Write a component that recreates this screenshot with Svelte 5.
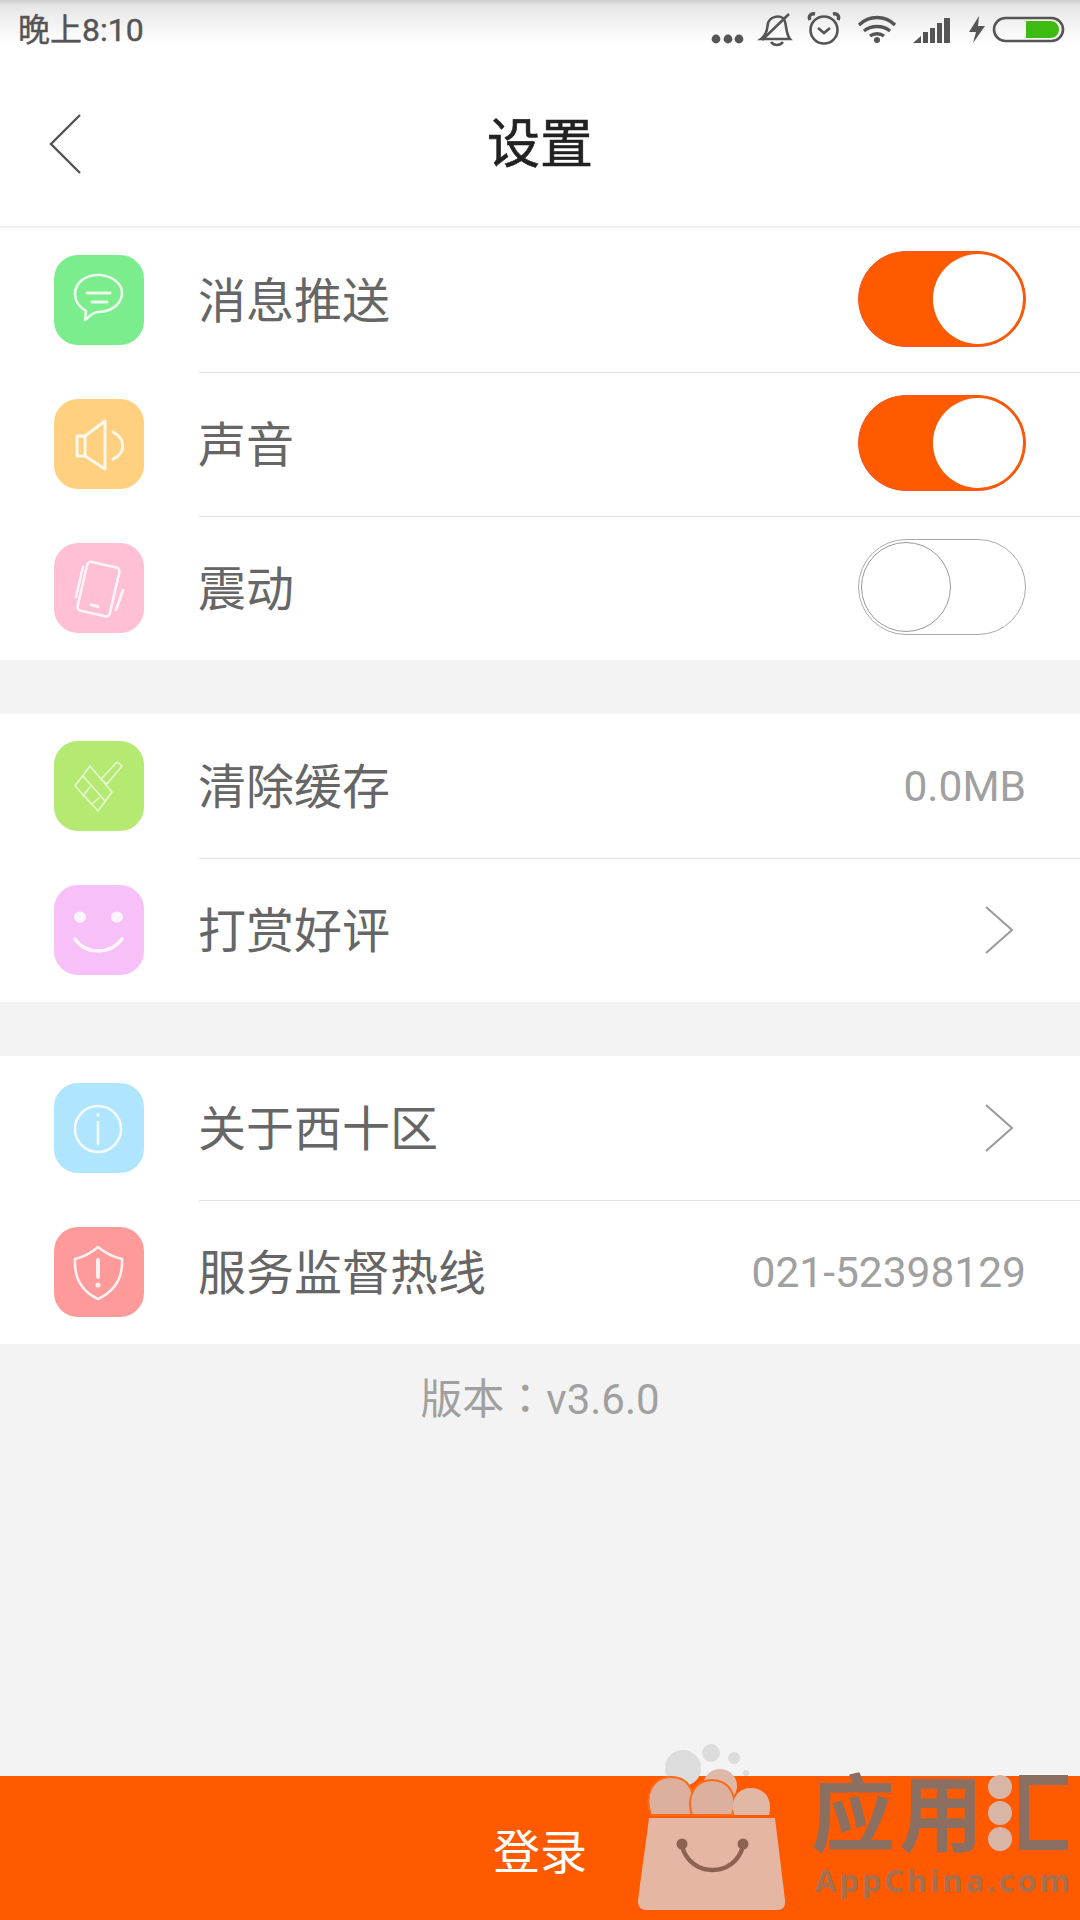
<script>
    // settings groups
    const groups = [
        [
            { icon: 'msg', label: '消息推送', toggle: true },
            { icon: 'sound', label: '声音', toggle: true },
            { icon: 'shake', label: '震动', toggle: false }
        ],
        [
            { icon: 'broom', label: '清除缓存', value: '0.0MB' },
            { icon: 'smile', label: '打赏好评', arrow: true }
        ],
        [
            { icon: 'info', label: '关于西十区', arrow: true },
            { icon: 'shield', label: '服务监督热线', value: '021-52398129' }
        ]
    ];
</script>

{#snippet rowIcon(kind)}
    <span class="icon {kind}">
        <svg viewBox="0 0 90 90" width="90" height="90" fill="none" stroke="#fff" stroke-width="2.6" stroke-linecap="round" stroke-linejoin="round" opacity="0.85">
            {#if kind === 'msg'}
                <path d="M31 65 L32 56 C25 52 21 46 21 39 C21 28 31 20 44 20 C57 20 68 28 68 38 C68 49 57 57 44 57 C41 57 39 58 31 65 Z" />
                <path d="M33 38 H56 M38 47 H53" stroke-width="3" />
            {:else if kind === 'sound'}
                <path d="M23 37 H31 V57 H23 Z" stroke-width="3" />
                <path d="M31 37 L51 22 V70 L31 57" stroke-width="3" />
                <path d="M59 33 C72 40 72 54 59 60" stroke-width="3" />
            {:else if kind === 'shake'}
                <g transform="rotate(13 44 46)">
                    <rect x="28" y="21" width="33" height="50" rx="4" />
                    <path d="M41 63 H48" stroke-width="3" />
                </g>
                <path d="M29 24 L22 54 M69 47 L62 67" />
            {:else if kind === 'broom'}
                <g opacity="0.8">
                    <path d="M21 45 L36 25 L58 51 L44 70 Z" stroke-width="1.6" />
                    <path d="M29 35 L51 60 M36 46 L29 55 M45 57 L38 63 M47 38 L53 43 L68 25 L63 21 Z" stroke-width="1.6" />
                </g>
            {:else if kind === 'smile'}
                <ellipse cx="26" cy="32" rx="6" ry="5.5" fill="#fff" stroke="none" />
                <ellipse cx="63" cy="32" rx="6" ry="5.5" fill="#fff" stroke="none" />
                <path d="M21 54 C32 70 56 70 68 54" stroke-width="3.6" />
            {:else if kind === 'info'}
                <circle cx="44" cy="46" r="23" />
                <path d="M44 39 V61" />
                <circle cx="44" cy="32" r="1.8" fill="#fff" stroke="none" />
            {:else if kind === 'shield'}
                <path d="M44 20 C51 26 59 30 68 32 C69 50 61 64 44 72 C27 64 20 50 21 32 C30 30 37 26 44 20 Z" />
                <path d="M44 33 V50" stroke-width="4" />
                <circle cx="44" cy="58" r="2.6" fill="#fff" stroke="none" />
            {/if}
        </svg>
    </span>
{/snippet}

<div class="page">
    <div class="statusbar">
        <span class="time">晚上8:10</span>
        <svg class="status-icons" width="376" height="50" viewBox="704 0 376 50" fill="none" stroke="#555" stroke-width="2.6">
            <g fill="#555" stroke="none">
                <circle cx="716" cy="39" r="4.4" />
                <circle cx="728" cy="39" r="4.4" />
                <circle cx="739" cy="39" r="4.4" />
            </g>
            <!-- bell -->
            <path d="M761 39 C768 34 767 27 768 23 C770 17 778 15 783 18 C787 21 785 33 790 39 Z" />
            <path d="M771 42 C774 46 780 46 783 42 M762 40 L789 14" />
            <!-- alarm -->
            <circle cx="824" cy="30" r="13.5" />
            <path d="M818 28 L824 33 L830 28" />
            <path d="M810 20 C808 16 811 13 815 14 M838 20 C840 16 837 13 833 14" stroke-width="3.4" />
            <!-- wifi -->
            <path d="M859 25 C869 15 885 15 895 25 M864 31 C871 25 883 25 890 31 M870 36 C874 33 880 33 884 36" stroke-width="3.4" />
            <circle cx="877" cy="40" r="3" fill="#555" stroke="none" />
            <!-- signal -->
            <g fill="#555" stroke="none">
                <path d="M913 43 L921 36 V43 Z" />
                <rect x="923" y="32" width="5" height="11" />
                <rect x="930" y="28" width="5" height="15" />
                <rect x="937" y="23" width="5" height="20" />
                <rect x="944" y="18" width="6" height="25" />
                <!-- bolt -->
                <path d="M979 16 L969 32 L976 32 L973 43 L985 26 L978 26 Z" />
            </g>
            <!-- battery -->
            <rect x="994" y="18" width="69" height="23" rx="11.5" />
            <path d="M1026 21 H1050 C1062 21 1062 38 1050 38 H1026 Z" fill="#3dbb10" stroke="none" />
        </svg>
    </div>

    <header class="nav">
        <svg class="back" width="34" height="62" viewBox="0 0 34 62" fill="none" stroke="#555" stroke-width="2.4">
            <path d="M32 2 L3 31 L32 60" />
        </svg>
        <h1>设置</h1>
    </header>

    {#each groups as group}
        <section class="group">
            {#each group as row}
                <div class="row">
                    {@render rowIcon(row.icon)}
                    <div class="row-main">
                        <span class="label">{row.label}</span>
                        {#if row.value}
                            <span class="value">{row.value}</span>
                        {:else if row.arrow}
                            <svg class="arrow" width="30" height="48" viewBox="0 0 30 48" fill="none" stroke="#999" stroke-width="2">
                                <path d="M2 1 L28 24 L2 47" />
                            </svg>
                        {:else}
                            <span class="switch" class:on={row.toggle}><span class="knob"></span></span>
                        {/if}
                    </div>
                </div>
            {/each}
        </section>
    {/each}

    <p class="version">版本：v3.6.0</p>

    <footer class="login">登录</footer>

    <!-- appchina watermark -->
    <svg class="watermark" width="480" height="200" viewBox="0 0 480 200">
        <g fill="#dcdcdc">
            <circle cx="83" cy="48" r="18" />
            <circle cx="111" cy="33" r="9" />
            <circle cx="134" cy="38" r="6" />
            <circle cx="146" cy="53" r="3" />
        </g>
        <circle cx="120" cy="66" r="17" fill="#dfb9a8" />
        <g fill="#dcb09c" stroke="#ff6a1a" stroke-width="2">
            <path d="M51 95 C44 75 52 57 71 57 C90 57 98 75 91 95 Z" />
            <path d="M92 95 C86 78 94 60 112 60 C130 60 139 78 132 95 Z" />
        </g>
        <path d="M134 95 C130 80 137 68 151 68 C165 68 173 80 169 95 Z" fill="#e0b8a4" />
        <path d="M49 98 H175 L185 180 Q186 190 177 190 H47 Q37 190 38 180 Z" fill="#e5b6a2" />
        <g fill="#8d6350">
            <circle cx="82" cy="124" r="5.5" />
            <circle cx="143" cy="124" r="5.5" />
        </g>
        <path d="M82 126 C90 158 135 158 143 126" fill="none" stroke="#8d6350" stroke-width="4.5" />
        <g fill="#8b6f60" font-family="'Noto Sans CJK SC', sans-serif" font-weight="700">
            <text x="211" y="125" font-size="84">应</text>
            <text x="299" y="125" font-size="84">用</text>
        </g>
        <g fill="#d9b5a6">
            <circle cx="400" cy="67" r="12" />
            <circle cx="400" cy="93" r="12" />
            <circle cx="400" cy="119" r="12" />
        </g>
        <path d="M468 60 H424 V125 H468" fill="none" stroke="#8b6f60" stroke-width="10" />
        <text x="215" y="172" font-size="31" font-weight="700" textLength="255" fill="#a5704f" font-family="'Open Sans', sans-serif">AppChina.com</text>
    </svg>
</div>

<style>
    :global(body) {
        margin: 0;
        background: #f3f3f3;
    }

    .page {
        position: relative;
        width: 1080px;
        height: 1920px;
        display: flex;
        flex-direction: column;
        overflow: hidden;
        background: #f3f3f3;
        font-family: "Noto Sans CJK SC", "Noto Sans", sans-serif;
    }

    .statusbar {
        height: 50px;
        display: flex;
        align-items: center;
        justify-content: space-between;
        padding-left: 18px;
        background: linear-gradient(#cfcfcf 0, #e6e6e6 6px, #f7f7f7 30px, #fff 46px);
    }

    .time {
        font-family: "Roboto", "Noto Sans CJK SC", sans-serif;
        font-size: 32px;
        color: #555;
        -webkit-text-stroke: 0.4px #555;
        line-height: 60px;
        position: relative;
        top: 5px;
    }

    .status-icons {
        display: block;
    }

    .nav {
        position: relative;
        height: 176px;
        display: flex;
        align-items: center;
        justify-content: center;
        background: #fff;
        border-bottom: 2px solid #f0f0f0;
    }

    .back {
        position: absolute;
        left: 48px;
        top: 63px;
    }

    h1 {
        margin: 0;
        font-size: 53px;
        font-weight: 400;
        -webkit-text-stroke: 0.6px #222;
        color: #222;
        line-height: 1;
        position: relative;
        top: 2px;
    }

    .group {
        background: #fff;
        margin-bottom: 54px;
    }

    .group:nth-of-type(3) {
        margin-bottom: 0;
    }

    .row {
        display: flex;
        align-items: center;
        height: 144px;
        padding-left: 54px;
    }

    .icon {
        width: 90px;
        height: 90px;
        flex: none;
        border-radius: 24px;
        margin-right: 55px;
    }

    .icon svg {
        display: block;
    }

    .msg { background: #7bed8d; }
    .sound { background: #ffd080; }
    .shake { background: #ffc0d5; }
    .broom { background: #b5ea72; }
    .smile { background: #f8c0f8; }
    .info { background: #b0e5ff; }
    .shield { background: #ff9a9a; }

    .row-main {
        flex: 1;
        height: 100%;
        display: flex;
        align-items: center;
        justify-content: space-between;
        padding-right: 54px;
    }

    .row + .row .row-main {
        box-shadow: inset 0 1px 0 #e3e3e3;
    }

    .label {
        font-size: 48px;
        color: #666;
        position: relative;
        top: -3px;
        left: -1px;
    }

    .value {
        font-family: "Roboto", sans-serif;
        font-size: 42.5px;
        color: #a0a0a0;
    }

    .arrow {
        margin-right: 12px;
    }

    .switch {
        position: relative;
        top: -1px;
        box-sizing: border-box;
        width: 168px;
        height: 96px;
        border-radius: 48px;
        border: 1.5px solid #aaa;
        background: #fff;
    }

    .switch .knob {
        position: absolute;
        box-sizing: border-box;
        left: 2px;
        top: 1.5px;
        width: 90px;
        height: 90px;
        border-radius: 50%;
        border: 1.5px solid #999;
        background: #fff;
    }

    .switch.on {
        border-color: #f0561e;
        background: #ff5a00;
    }

    .switch.on .knob {
        left: auto;
        right: 2px;
        border: 0;
    }

    .version {
        margin: 28px 0 0;
        text-align: center;
        font-family: "Roboto", "Noto Sans CJK TC", sans-serif;
        font-size: 42px;
        line-height: 56px;
        color: #a0a0a0;
    }

    .login {
        margin-top: auto;
        height: 144px;
        display: flex;
        align-items: center;
        justify-content: center;
        background: #ff5a00;
        color: #fff;
        font-size: 47px;
    }

    .watermark {
        position: absolute;
        right: 0;
        bottom: 0;
    }
</style>
